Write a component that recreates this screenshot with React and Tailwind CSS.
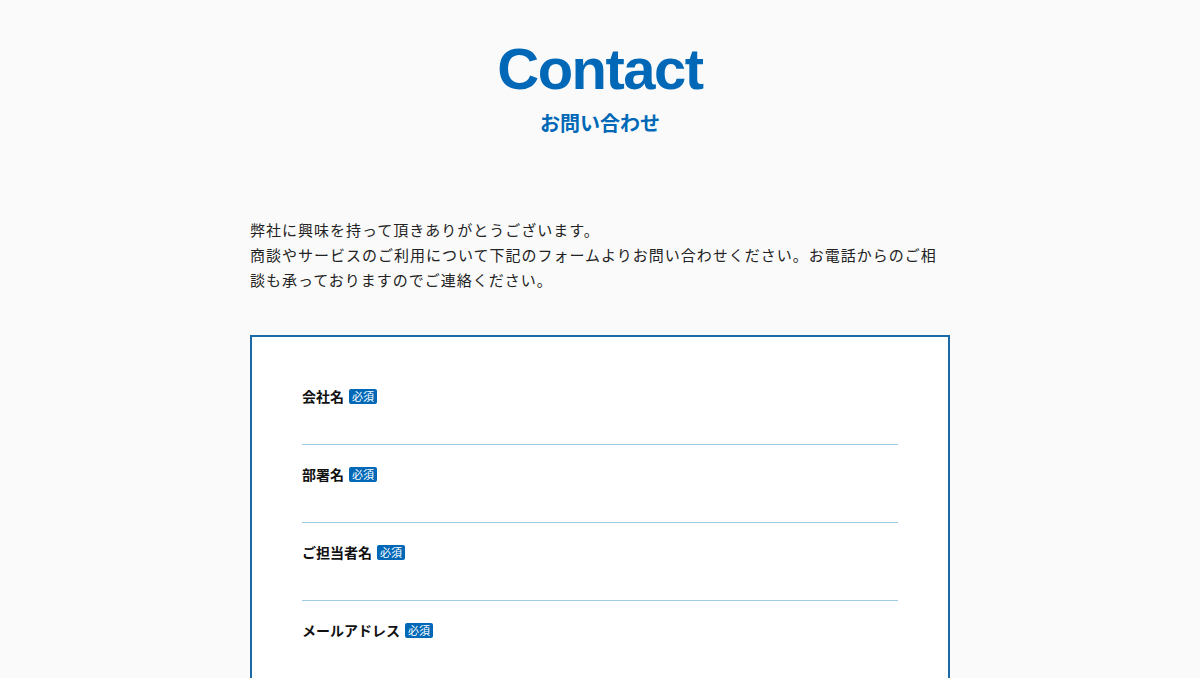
export default function App() {
  const jp = { fontFamily: '"Noto Sans CJK JP", "Noto Sans", sans-serif' };
  const fields = ["会社名", "部署名", "ご担当者名", "メールアドレス"];
  return (
    <div className="min-h-[678px] bg-[#fafafa] text-[#222]" style={jp}>
      <header className="flex flex-col items-center pt-[34px]">
        <h1
          className="text-[58px] font-bold leading-[70px] tracking-[-1.5px] text-[#0068b7]"
          style={{ fontFamily: '"Liberation Sans", Arial, sans-serif' }}
        >
          Contact
        </h1>
        <p className="mt-[5px] text-[20px] font-bold leading-[28px] text-[#0068b7]">お問い合わせ</p>
      </header>

      <main className="mx-auto w-[700px] pt-[80px]">
        <p className="text-[15px] leading-[25px] tracking-[1px]">
          弊社に興味を持って頂きありがとうございます。
          <br />
          商談やサービスのご利用について下記のフォームよりお問い合わせください。お電話からのご相談も承っておりますのでご連絡ください。
        </p>

        <form className="mt-[43px] border-2 border-[#1a69a8] bg-white px-[50px] pt-[30px] pb-10">
          {fields.map((f) => (
            <div key={f} className="border-b border-[#9fcbe5] pt-[19px] pb-[38px]">
              <label className="flex h-5 items-center gap-[5px] text-[14px] font-bold leading-5 text-[#111]">
                {f}
                <span className="rounded-[2px] bg-[#0068b7] px-[3px] text-[11px] font-normal leading-[15px] text-white">
                  必須
                </span>
              </label>
            </div>
          ))}
        </form>
      </main>
    </div>
  );
}
